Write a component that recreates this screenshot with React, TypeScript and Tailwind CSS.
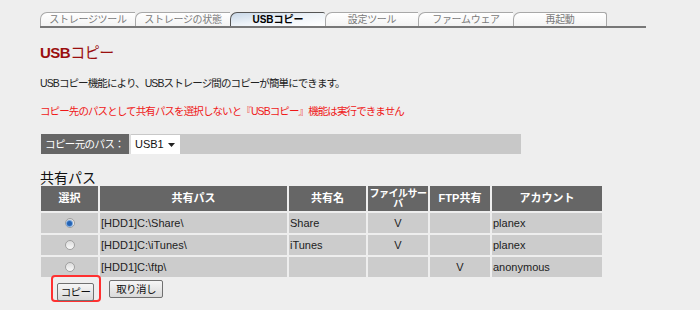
const font = "font-['Liberation_Sans','Noto_Sans_CJK_JP',sans-serif]";

const tabs = [
  { label: "ストレージツール", w: "w-[95px]", active: false },
  { label: "ストレージの状態", w: "w-[95px]", active: false },
  { label: "USBコピー", w: "w-[95px]", active: true },
  { label: "設定ツール", w: "w-[93px]", active: false },
  { label: "ファームウェア", w: "w-[95px]", active: false },
  { label: "再起動", w: "w-[94px]", active: false },
];

const rows = [
  { checked: true, path: "[HDD1]C:\\Share\\", name: "Share", file: "V", ftp: "", account: "planex" },
  { checked: false, path: "[HDD1]C:\\iTunes\\", name: "iTunes", file: "V", ftp: "", account: "planex" },
  { checked: false, path: "[HDD1]C:\\ftp\\", name: "", file: "", ftp: "V", account: "anonymous" },
];

function Radio({ checked }: { checked: boolean }) {
  return (
    <span className="w-[10px] h-[10px] rounded-full border border-[#a0a0a0] bg-gradient-to-b from-[#dcdcdc] to-[#fafafa] flex items-center justify-center">
      {checked && <span className="w-[5px] h-[5px] rounded-full bg-[#2463b4] ring-1 ring-[#7aa6dc]" />}
    </span>
  );
}

function Tabs() {
  return (
    <div className="flex w-[606px] border-b-2 border-[#777]">
      {tabs.map((t, i) =>
        t.active ? (
          <div
            key={t.label}
            className={`${t.w} h-[14px] border-t border-l border-[#555] rounded-tl-[7px] rounded-tr-[2px] bg-gradient-to-br from-[#c9d8e8] via-[#eef3f8] to-[#ffffff] text-[10px] leading-[13px] font-bold text-black text-center`}
          >
            {t.label}
          </div>
        ) : (
          <div
            key={t.label}
            className={`${t.w} h-[14px] border-t border-l border-[#a8a8a8] rounded-tl-[7px] bg-gradient-to-b from-[#ffffff] to-[#f3f3f3] text-[10px] leading-[13px] text-[#7a7a7a] text-center tracking-[-0.3px] ${i === tabs.length - 1 ? "border-r rounded-tr-[3px]" : ""}`}
          >
            {t.label}
          </div>
        )
      )}
    </div>
  );
}

export default function App() {
  return (
    <div className={`w-[700px] h-[310px] bg-[#eeeeee] overflow-hidden ${font}`}>
      <div className="pl-[40px] pt-[12px]">
        <Tabs />

        <h1 className="mt-[16px] text-[15px] leading-[18px] text-[#9a0f0f] tracking-[-0.5px]">
          <span className="font-bold">USB</span>コピー
        </h1>

        <p className="mt-[14px] text-[10.5px] leading-[14px] text-[#222] tracking-[-0.9px]">
          USBコピー機能により、USBストレージ間のコピーが簡単にできます。
        </p>

        <p className="mt-[14px] text-[10.5px] leading-[14px] text-[#f01818] tracking-[-0.9px]">
          コピー先のパスとして共有パスを選択しないと『USBコピー』機能は実行できません
        </p>

        <div className="mt-[16px] ml-[1px] w-[480px] h-[20px] flex bg-[#c8c8c8]">
          <div className="w-[88px] bg-[#666] text-white text-[10.5px] leading-[20px] pl-[4px] tracking-[-0.6px]">
            コピー元のパス：
          </div>
          <div className="w-[2px] bg-[#dcdcdc]" />
          <div className="mt-[1px] w-[49px] h-[19px] bg-white flex items-center justify-between pl-[4px] pr-[5px] text-[11px] text-[#111]">
            <span>USB1</span>
            <svg width="7" height="4" viewBox="0 0 7 4">
              <polygon points="0,0 7,0 3.5,4" fill="#222" />
            </svg>
          </div>
        </div>

        <h2 className="mt-[16px] text-[14px] leading-[16px] text-[#111]">共有パス</h2>

        <div className="mt-[0px] ml-[1px] w-[561px] grid grid-cols-[57px_187px_77px_60px_60px_110px] gap-[2px]">
          <div className="h-[25px] bg-[#666] text-white font-bold text-[11px] flex items-center justify-center">選択</div>
          <div className="h-[25px] bg-[#666] text-white font-bold text-[11px] flex items-center justify-center">共有パス</div>
          <div className="h-[25px] bg-[#666] text-white font-bold text-[11px] flex items-center justify-center">共有名</div>
          <div className="h-[25px] bg-[#666] text-white font-bold text-[10px] leading-[10px] flex items-center justify-center text-center tracking-[-0.5px]">
            ファイルサー
            <br />
            バ
          </div>
          <div className="h-[25px] bg-[#666] text-white font-bold text-[11px] flex items-center justify-center">FTP共有</div>
          <div className="h-[25px] bg-[#666] text-white font-bold text-[11px] flex items-center justify-center">アカウント</div>

          {rows.map((r) => (
            <div key={r.path} className="contents">
              <div className="h-[20px] bg-[#cccccc] flex items-center justify-center">
                <Radio checked={r.checked} />
              </div>
              <div className="h-[20px] bg-[#cccccc] flex items-center pl-[1px] text-[11px] text-[#222]">{r.path}</div>
              <div className="h-[20px] bg-[#cccccc] flex items-center pl-[1px] text-[11px] text-[#222]">{r.name}</div>
              <div className="h-[20px] bg-[#cccccc] flex items-center justify-center text-[11px] text-[#222]">{r.file}</div>
              <div className="h-[20px] bg-[#cccccc] flex items-center justify-center text-[11px] text-[#222]">{r.ftp}</div>
              <div className="h-[20px] bg-[#cccccc] flex items-center pl-[1px] text-[11px] text-[#222]">{r.account}</div>
            </div>
          ))}
        </div>

        <div className="-mt-[2px] ml-[11px] flex items-center">
          <div className="w-[50px] h-[27px] border-2 border-[#ff3030] rounded-[4px] pl-[4px] pt-[2px]">
            <button className="w-[37px] h-[18px] border border-[#707070] rounded-[2px] bg-gradient-to-b from-[#f6f6f6] to-[#dadada] text-[10.5px] leading-[16px] text-[#111] tracking-[-0.6px]">
              コピー
            </button>
          </div>
          <button className="ml-[8px] w-[54px] h-[18px] border border-[#707070] rounded-[2px] bg-gradient-to-b from-[#f6f6f6] to-[#dadada] text-[10.5px] leading-[16px] text-[#111] tracking-[-0.6px]">
            取り消し
          </button>
        </div>
      </div>
    </div>
  );
}
